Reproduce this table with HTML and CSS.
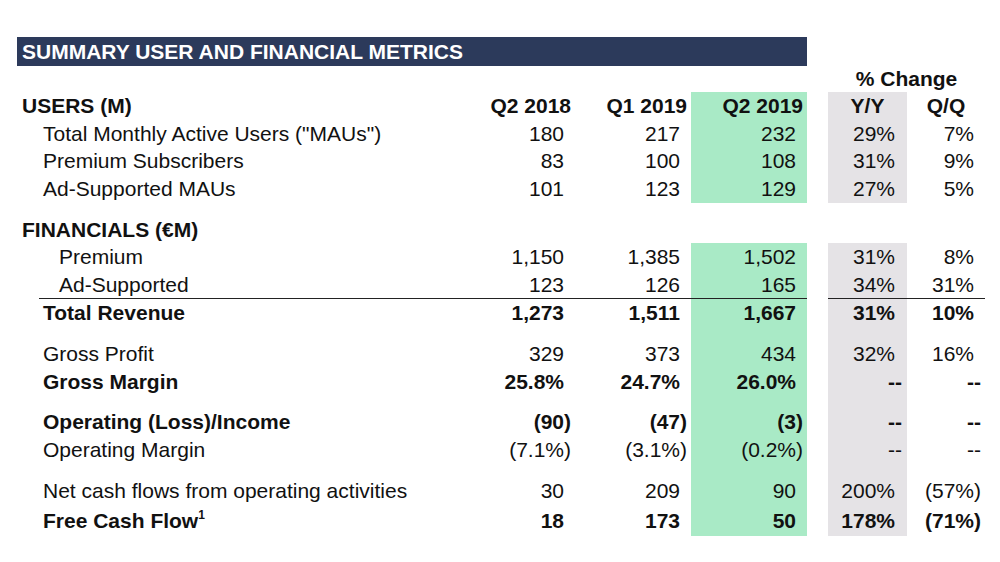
FILE: index.html
```html
<!DOCTYPE html>
<html>
<head>
<meta charset="utf-8">
<link rel="stylesheet" href="styles.css">
</head>
<body>
<div class="page">
  <div class="title">SUMMARY USER AND FINANCIAL METRICS</div>
  <table class="metrics">
    <colgroup>
      <col class="c-label"><col class="c-num"><col class="c-num"><col class="c-num"><col class="c-gap"><col class="c-yy"><col class="c-qq">
    </colgroup>
    <tr class="r-change b"><td></td><td></td><td></td><td></td><td></td><td colspan="2" class="center">% Change</td></tr>
    <tr class="r-head b">
      <td class="l0">USERS (M)</td><td class="num">Q2 2018</td><td class="num">Q1 2019</td><td class="num hl">Q2 2019</td><td></td><td class="center gr">Y/Y</td><td class="center">Q/Q</td>
    </tr>
    <tr class="r27"><td class="l1">Total Monthly Active Users ("MAUs")</td><td class="num">180<span class="p"></span></td><td class="num">217<span class="p"></span></td><td class="num hl">232<span class="p"></span></td><td></td><td class="num gr">29%<span class="p"></span></td><td class="num">7%<span class="p"></span></td></tr>
    <tr class="r28"><td class="l1">Premium Subscribers</td><td class="num">83<span class="p"></span></td><td class="num">100<span class="p"></span></td><td class="num hl">108<span class="p"></span></td><td></td><td class="num gr">31%<span class="p"></span></td><td class="num">9%<span class="p"></span></td></tr>
    <tr class="r28"><td class="l1">Ad-Supported MAUs</td><td class="num">101<span class="p"></span></td><td class="num">123<span class="p"></span></td><td class="num hl">129<span class="p"></span></td><td></td><td class="num gr">27%<span class="p"></span></td><td class="num">5%<span class="p"></span></td></tr>
    <tr class="gap"><td colspan="7"></td></tr>
    <tr class="r27 b"><td class="l0">FINANCIALS (€M)</td><td></td><td></td><td></td><td></td><td></td><td></td></tr>
    <tr class="r28"><td class="l2">Premium</td><td class="num">1,150<span class="p"></span></td><td class="num">1,385<span class="p"></span></td><td class="num hl">1,502<span class="p"></span></td><td></td><td class="num gr">31%<span class="p"></span></td><td class="num">8%<span class="p"></span></td></tr>
    <tr class="r27 rule"><td class="l2 rule-label">Ad-Supported</td><td class="num">123<span class="p"></span></td><td class="num">126<span class="p"></span></td><td class="num hl">165<span class="p"></span></td><td class="norule"></td><td class="num gr">34%<span class="p"></span></td><td class="num">31%<span class="p"></span></td></tr>
    <tr class="r28 b"><td class="l1">Total Revenue</td><td class="num">1,273<span class="p"></span></td><td class="num">1,511<span class="p"></span></td><td class="num hl">1,667<span class="p"></span></td><td></td><td class="num gr">31%<span class="p"></span></td><td class="num">10%<span class="p"></span></td></tr>
    <tr class="gap"><td></td><td></td><td></td><td class="hl"></td><td></td><td class="gr"></td><td></td></tr>
    <tr class="r28"><td class="l1">Gross Profit</td><td class="num">329<span class="p"></span></td><td class="num">373<span class="p"></span></td><td class="num hl">434<span class="p"></span></td><td></td><td class="num gr">32%<span class="p"></span></td><td class="num">16%<span class="p"></span></td></tr>
    <tr class="r27 b"><td class="l1">Gross Margin</td><td class="num">25.8%<span class="p"></span></td><td class="num">24.7%<span class="p"></span></td><td class="num hl">26.0%<span class="p"></span></td><td></td><td class="num gr">--</td><td class="num">--</td></tr>
    <tr class="gap"><td></td><td></td><td></td><td class="hl"></td><td></td><td class="gr"></td><td></td></tr>
    <tr class="r28 b"><td class="l1">Operating (Loss)/Income</td><td class="num">(90)</td><td class="num">(47)</td><td class="num hl">(3)</td><td></td><td class="num gr">--</td><td class="num">--</td></tr>
    <tr class="r28"><td class="l1">Operating Margin</td><td class="num">(7.1%)</td><td class="num">(3.1%)</td><td class="num hl">(0.2%)</td><td></td><td class="num gr">--</td><td class="num">--</td></tr>
    <tr class="gap"><td></td><td></td><td></td><td class="hl"></td><td></td><td class="gr"></td><td></td></tr>
    <tr class="r28"><td class="l1">Net cash flows from operating activities</td><td class="num">30<span class="p"></span></td><td class="num">209<span class="p"></span></td><td class="num hl">90<span class="p"></span></td><td></td><td class="num gr">200%<span class="p"></span></td><td class="num">(57%)</td></tr>
    <tr class="r31 b"><td class="l1">Free Cash Flow<sup>1</sup></td><td class="num">18<span class="p"></span></td><td class="num">173<span class="p"></span></td><td class="num hl">50<span class="p"></span></td><td></td><td class="num gr">178%<span class="p"></span></td><td class="num">(71%)</td></tr>
  </table>
</div>
</body>
</html>
```

FILE: styles.css
```css
html, body {
  margin: 0;
  padding: 0;
  background: #ffffff;
}
body {
  font-family: "Liberation Sans", Arial, sans-serif;
  color: #111111;
}
.page {
  padding: 37px 0 0 17px;
}
.title {
  width: 785px;
  height: 29px;
  padding-left: 5px;
  background: #2c3a5b;
  color: #ffffff;
  font-weight: bold;
  font-size: 21px;
  line-height: 30px;
}
.metrics {
  border-collapse: collapse;
  table-layout: fixed;
  width: 968px;
  font-size: 21px;
}
.c-label { width: 442px; }
.c-num { width: 116px; }
.c-gap { width: 21px; }
.c-yy { width: 79px; }
.c-qq { width: 78px; }
.metrics td {
  padding: 0;
  white-space: nowrap;
  vertical-align: middle;
  line-height: 22px;
}
.r-change td { height: 26px; }
.r-head td { height: 28px; }
.r27 td { height: 27px; }
.r28 td { height: 28px; }
.r31 td { height: 31px; }
.gap td { height: 13px; }
.b td { font-weight: bold; }
.l0 { padding-left: 5px !important; }
.l1 { padding-left: 26px !important; }
.l2 { padding-left: 42px !important; }
.num {
  text-align: right;
  padding-right: 4px !important;
}
td.gr.num { padding-right: 5px !important; }
.center { text-align: center; }
.p {
  display: inline-block;
  width: 0.333em;
}
.hl { background: #a9eac6; }
.gr { background: #e5e3e6; }
.rule td { border-bottom: 1px solid #222222; }
.rule td.norule { border-bottom: none; }
.rule td.rule-label {
  border-bottom: none;
  background: linear-gradient(#222222, #222222) no-repeat 22px 100% / calc(100% - 22px) 1px;
}
sup {
  font-size: 12px;
  line-height: 0;
  vertical-align: 9px;
}
```
